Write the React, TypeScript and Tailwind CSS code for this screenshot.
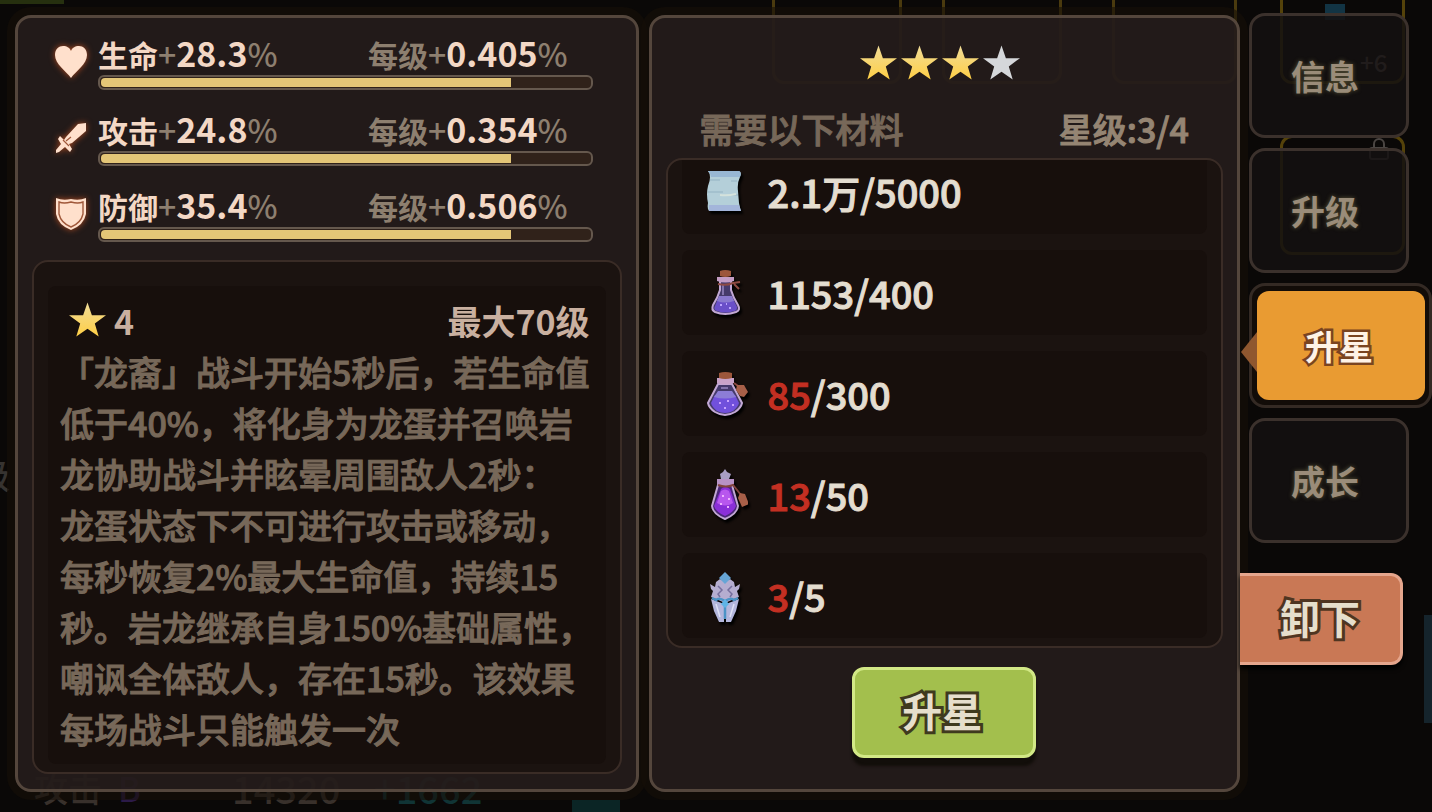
import React from 'react';
import { Lock } from 'lucide-react';

const stats = [
  { id: 'hp', label: '生命', value: '28.3', step: '0.405', icon: HeartIcon },
  { id: 'atk', label: '攻击', value: '24.8', step: '0.354', icon: SwordIcon },
  { id: 'def', label: '防御', value: '35.4', step: '0.506', icon: ShieldIcon },
];

const skillLines = [
  '「龙裔」战斗开始5秒后，若生命值',
  '低于40%，将化身为龙蛋并召唤岩',
  '龙协助战斗并眩晕周围敌人2秒：',
  '龙蛋状态下不可进行攻击或移动，',
  '每秒恢复2%最大生命值，持续15',
  '秒。岩龙继承自身150%基础属性，',
  '嘲讽全体敌人，存在15秒。该效果',
  '每场战斗只能触发一次',
];

const materials = [
  { icon: ScrollIcon, have: '2.1万', need: '5000', enough: true },
  { icon: FlaskIcon, have: '1153', need: '400', enough: true },
  { icon: PotionIcon, have: '85', need: '300', enough: false },
  { icon: ElixirIcon, have: '13', need: '50', enough: false },
  { icon: CrystalIcon, have: '3', need: '5', enough: false },
];

function HeartIcon() {
  return (
    <svg viewBox="0 0 34 34" className="w-[34px] h-[34px] drop-shadow-[0_0_3px_#b04c22]">
      <path d="M17 33C12 26 1 19 1 10C1 4 5 1 9 1C13 1 16 3 17 6C18 3 21 1 25 1C29 1 33 4 33 10C33 19 22 26 17 33Z" fill="#ffe0cc" />
    </svg>
  );
}

function SwordIcon() {
  return (
    <svg viewBox="0 0 34 34" className="w-[34px] h-[34px] drop-shadow-[0_0_3px_#b04c22]">
      <path d="M24 3L32 2L32 10L18 22L15 23L18 28L16 31L11 26L5 31L2 32L2 29L7 23L4 18L6 15L10 19L12 16Z" fill="#ffe0cc" />
      <path d="M9 19L15 25M12 20L17 16" stroke="#a0583a" strokeWidth="1.2" />
    </svg>
  );
}

function ShieldIcon() {
  return (
    <svg viewBox="0 0 34 34" className="w-[34px] h-[34px] drop-shadow-[0_0_3px_#b04c22]">
      <path d="M2 1Q9 4 17 2Q25 4 32 1V17Q30 28 17 33Q4 28 2 17Z" fill="#ffe0cc" />
      <path d="M5 5Q10 7 17 5Q24 7 29 5V17Q27 26 17 30Q7 26 5 17Z" fill="none" stroke="#a0583a" strokeWidth="1.4" />
    </svg>
  );
}

function Star({ lit = true }: { lit?: boolean }) {
  return (
    <svg viewBox="0 0 38 36" className="w-[37px] h-9">
      <defs>
        <linearGradient id="gold" x1="0" y1="0" x2="0" y2="1">
          <stop offset="0" stopColor="#f0dc98" />
          <stop offset="1" stopColor="#ffcf45" />
        </linearGradient>
      </defs>
      <path d="M19 0L23.5 13H38L26.500 21.500L30.500 35L19 27L7.500 35L11.500 21.500L0 13H14.500Z" fill={lit ? 'url(#gold)' : '#d5d7da'} />
    </svg>
  );
}

function ScrollIcon() {
  return (
    <svg viewBox="0 0 48 54" className="w-12 h-[54px] drop-shadow-[2px_3px_1px_#000]">
      <path d="M8 6H39Q42 7 40 12Q37 18 38 26L39 38Q40 43 41 46H9Q7 44 8 38Q6 29 8 21Q12 11 8 6Z" fill="#b4cfd9" />
      <path d="M8 6H39Q42 7 40 12H11Q11 9 8 6Z" fill="#98b7d3" />
      <path d="M9 40H39L41 46H9Z" fill="#a3b5da" />
      <path d="M10 15H20M31 16H37M8 27H23M30 30H38" stroke="#94b3c3" />
      <path d="M20 30Q28 31 36 29" stroke="#d4e2dc" strokeWidth="2" fill="none" />
    </svg>
  );
}

function FlaskIcon() {
  return (
    <svg viewBox="0 0 48 54" className="w-12 h-[54px] drop-shadow-[2px_3px_1px_#000]">
      <path d="M20 15V24Q18 31 13 39Q11 44 15 46Q25 50 36 46Q41 44 38 39Q33 31 31 24V15Z" fill="#453a6b" stroke="#c2a8d4" strokeWidth="2" />
      <path d="M18 33H33L37 41Q37 45 34 45Q25 48 17 45Q13 44 15 40Z" fill="#6a4fc9" />
      <path d="M19 30H32L34 35Q25 38 17 35Z" fill="#8a79cf" />
      <path d="M23 18V29" stroke="#8273ab" strokeWidth="2" />
      <path d="M17 11H34V15Q25 18 17 15Z" fill="#c49dc4" />
      <path d="M18 18Q26 20 33 17L40 16M34 18L39 23" stroke="#8d4a42" strokeWidth="2" fill="none" />
      <path d="M20 5Q25 3 31 5V10Q25 12 20 10Z" fill="#9c563b" />
      <path d="M20 39H22M29 42H31M26 38H27" stroke="#bda4ff" strokeWidth="2" />
    </svg>
  );
}

function PotionIcon() {
  return (
    <svg viewBox="0 0 48 54" className="w-12 h-[54px] drop-shadow-[2px_3px_1px_#000]">
      <path d="M18 17L8 36Q9 41 15 45Q25 51 35 45Q41 41 42 36L32 17Z" fill="#453a6b" stroke="#c2a8d4" strokeWidth="2" />
      <path d="M15 28H35L39 36Q38 40 33 44Q25 48 17 44Q12 40 11 36Z" fill="#7150dc" />
      <path d="M18 24H32L36 30Q25 33 14 30Z" fill="#8c7dd6" />
      <path d="M21 21H28" stroke="#8273ab" strokeWidth="2" />
      <path d="M17 11H34V16Q25 19 17 16Z" fill="#c9a3c9" />
      <path d="M19 6Q25 4 32 6V11Q25 13 19 11Z" fill="#9c563b" />
      <path d="M34 16L38 19" stroke="#8d4a42" strokeWidth="2" />
      <path d="M37 18L44 18L48 25L44 30L40 29L36 23Z" fill="#a75f48" />
      <path d="M19 36H21M27 34H29M32 38H34M24 41H26" stroke="#c8a2ff" strokeWidth="2" />
    </svg>
  );
}

function ElixirIcon() {
  return (
    <svg viewBox="0 0 48 54" className="w-12 h-[54px] drop-shadow-[2px_3px_1px_#000]">
      <path d="M18 17L12 38Q13 46 25 51Q37 46 38 38L32 17Z" fill="#4b2779" stroke="#c2a8d4" strokeWidth="2" />
      <path d="M21 21Q25 17 30 21L36 38Q34 44 25 48Q16 44 14 38Z" fill="#8a2fd8" />
      <path d="M21 23Q25 20 29 23L33 35Q25 40 17 35Z" fill="#b857ee" />
      <path d="M17 11H34V16Q25 19 17 16Z" fill="#b792c5" />
      <path d="M25 1L27 4L31 6L29 11H21L20 6L23 4Z" fill="#a89dc4" />
      <path d="M18 17Q26 20 33 17L41 27" stroke="#81443e" strokeWidth="2" fill="none" />
      <path d="M40 25L45 26L49 36L42 39L38 30Z" fill="#a75f48" />
      <path d="M22 28H24M28 31H30M20 36H22M27 39H29" stroke="#efb0ff" strokeWidth="2" />
    </svg>
  );
}

function CrystalIcon() {
  return (
    <svg viewBox="0 0 48 54" className="w-12 h-[54px] drop-shadow-[2px_3px_1px_#000]">
      <path d="M20 10L25 13L30 10L34 13L35 18L40 15L39 20L37 22L39 28L34 30L25 34L16 30L11 28L13 22L11 20L10 15L15 18L16 13Z" fill="#b5add0" />
      <path d="M11 30L24 35V53H19L14 42Z" fill="#b3b6dc" />
      <path d="M39 30L26 35V53H31L36 42Z" fill="#b3b6dc" />
      <path d="M25 3L31 9L25 15L19 9Z" fill="#66a5d6" />
      <path d="M12 29L16 31Q19 28 25 32Q31 28 34 31L38 29M25 32V50" stroke="#4c93c6" strokeWidth="2.500" fill="none" />
      <path d="M25 30L29 35L25 39L21 35Z" fill="#5fb4e6" />
      <path d="M18 17L22 21L18 25L20 28M32 17L28 21L32 25L30 28" stroke="#756e9d" strokeWidth="1.500" fill="none" />
      <path d="M16 35L20 48M34 35L30 48" stroke="#dde0f5" strokeWidth="1.500" />
    </svg>
  );
}

function Tab({ children }: { children: React.ReactNode }) {
  return (
    <button className="w-40 h-[125px] rounded-2xl border-[3px] border-[#3b312c] bg-[#141010]/85 pr-2 text-[34px] leading-[51px] font-bold text-[#9a8c79] [text-shadow:0_0_4px_#5c5638]">
      {children}
    </button>
  );
}

export default function App() {
  return (
    <div className="relative isolate min-h-screen overflow-hidden bg-[#0a0807] font-['Noto_Sans_CJK_SC','Noto_Sans',sans-serif]">
      {/* dimmed character screen behind the dialog */}
      <div className="absolute inset-0 -z-10 overflow-hidden text-[34px] leading-[40px] font-medium" aria-hidden="true">
        <div className="absolute left-0 top-0 h-1 w-16 bg-[#26300f]" />
        <div className="absolute -left-6 top-[455px] text-[#363330]">级</div>
        <div className="absolute bottom-1 left-[34px] flex items-center text-[#38302b]">
          <span className="w-[84px]">攻击</span>
          <span className="w-[114px] text-[#2b1a48]">B</span>
          <span className="w-[142px] text-[38px]">14320</span>
          <span className="text-[38px] text-[#103435]">+1662</span>
        </div>
        <div className="absolute bottom-0 left-[572px] h-3 w-12 bg-[#0b2525]" />
        <div className="absolute -top-4 left-[772px] h-[100px] w-[130px] rounded-xl border-[3px] border-[#4a3a0e]" />
        <div className="absolute -top-4 left-[942px] h-[100px] w-[120px] rounded-xl border-[3px] border-[#4a3a0e]" />
        <div className="absolute -top-4 left-[1112px] h-[100px] w-[125px] rounded-xl border-[3px] border-[#4a3a0e]" />
        <div className="absolute -top-4 left-[1280px] h-[100px] w-[125px] rounded-xl border-[3px] border-[#54420a]" />
        <div className="absolute left-[1280px] top-[135px] h-[120px] w-[125px] rounded-xl border-[3px] border-[#54420a]" />
        <div className="absolute left-[1325px] top-1 h-4 w-5 bg-[#123444]" />
        <div className="absolute left-[1360px] top-[42px] text-[24px] text-[#6a625c]">+6</div>
        <Lock className="absolute left-[1367px] top-[137px] h-6 w-6 text-[#4a4542]" />
        <div className="absolute right-0 top-[615px] h-[108px] w-2 bg-[#15242c]" />
      </div>

      <main className="flex min-h-screen items-stretch pt-[15px] pb-5">
        <section className="ml-[15px] flex flex-[625] flex-col rounded-2xl border-[3px] border-[#54463c] bg-[#241c1b]/94 px-[14px] pt-[15px] pb-[15px] shadow-[0_0_0_8px_#150f0899]">
          <div className="flex flex-col gap-[19px] pl-[22px] pr-[29px]">
            {stats.map((s) => (
              <div key={s.id} className="flex items-center gap-[10px]">
                <s.icon />
                <div className="flex-1">
                  <div className="flex h-[42px] items-baseline text-[32px] leading-[40px] font-medium text-[#8d7f6f]">
                    <div className="flex w-[270px] items-baseline">
                      <span className="text-[30px] font-bold text-[#f3d8c5]">{s.label}</span>
                      <span>+</span>
                      <span className="text-[34px] font-bold text-[#f3d8c5]">{s.value}</span>
                      <span>%</span>
                    </div>
                    <div className="flex items-baseline">
                      <span className="text-[30px] font-bold">每级</span>
                      <span>+</span>
                      <span className="text-[34px] font-bold text-[#f3d8c5]">{s.step}</span>
                      <span>%</span>
                    </div>
                  </div>
                  <div className="h-[15px] rounded-md border-2 border-[#65584d] bg-[#30221a] p-px">
                    <div className="h-full w-[84%] rounded-l-sm bg-[#e4c677]" />
                  </div>
                </div>
              </div>
            ))}
          </div>

          <div className="mt-[18px] flex-1 rounded-2xl border-2 border-[#3a2c26] bg-[#1b1310] px-[14px] pt-6 pb-2">
            <div className="h-full rounded-lg bg-[#170f0c] px-3 pt-2">
              <div className="flex h-[52px] items-center justify-between pl-[9px] pr-1 text-[34px] leading-[51px] font-bold text-[#c9b0a0]">
                <span className="flex items-center gap-2">
                  <Star />4
                </span>
                <span>最大70级</span>
              </div>
              <p className="text-[34px] leading-[51px] font-medium whitespace-nowrap text-[#776859] [-webkit-text-stroke:1px_#776859]">
                {skillLines.map((line) => (
                  <span key={line} className="block">{line}</span>
                ))}
              </p>
            </div>
          </div>
        </section>

        <section className="ml-[10px] flex flex-[591] flex-col rounded-2xl border-[3px] border-[#54463c] bg-[#241c1b]/94 px-[14px] pt-[27px] shadow-[0_0_0_8px_#150f0899]">
          <div className="flex justify-center gap-1 pr-2">
            <Star />
            <Star />
            <Star />
            <Star lit={false} />
          </div>
          <div className="mt-[22px] flex items-center justify-between px-[34px] text-[34px] leading-[51px] font-medium">
            <h2 className="font-medium text-[#776859] [-webkit-text-stroke:1px_#776859]">需要以下材料</h2>
            <span className="text-[#958573] [-webkit-text-stroke:1px_#958573]">星级:3/4</span>
          </div>

          <div className="mt-1 overflow-hidden rounded-2xl border-2 border-[#3a2c26] bg-[#1b1310] px-[14px] pb-2">
            <ul className="-mt-[11px] flex flex-col gap-4">
              {materials.map((m) => (
                <li key={m.need} className="flex h-[85px] items-center gap-5 rounded-lg bg-[#170f0c] pl-[18px] text-[38px] leading-[51px] font-medium text-[#e4ddd0] [-webkit-text-stroke:1px_currentColor]">
                  <m.icon />
                  <span>
                    {m.enough ? m.have : <span className="text-[#c32f22]">{m.have}</span>}/{m.need}
                  </span>
                </li>
              ))}
            </ul>
          </div>

          <button className="mx-auto mt-[19px] h-[91px] w-[184px] rounded-xl border-[3px] border-[#d2e886] bg-[#a3bf4d] pr-1 pb-1 text-[40px] leading-[51px] font-bold text-[#e6dfcc] shadow-[0_8px_3px_#120e0a] [-webkit-text-stroke:6px_#3f3a1e] [paint-order:stroke_fill]">
            升星
          </button>
        </section>

        <nav className="-mt-[2px] flex w-48 flex-none flex-col">
          <div className="flex flex-col gap-[10px] pl-[9px]">
            <Tab>信息</Tab>
            <Tab>升级</Tab>
            <div className="relative">
              <svg viewBox="0 0 16 40" className="absolute top-[49px] -left-2 h-10 w-4">
                <path d="M16 0L0 20L16 40Z" fill="#8f572f" />
              </svg>
              <div className="rounded-2xl border-[3px] border-[#342a24] bg-[#120c08] p-[5px] pr-1">
                <button className="h-[109px] w-full rounded-xl bg-[#e99b32] pr-1 text-[34px] leading-[51px] font-bold text-[#fff3e6] [-webkit-text-stroke:5px_#7a4420] [paint-order:stroke_fill]">
                  升星
                </button>
              </div>
            </div>
            <Tab>成长</Tab>
          </div>
          <button className="mt-[30px] h-[92px] w-[163px] rounded-r-xl border-[3px] border-l-0 border-[#e5a68d] bg-[#c97855] pb-1 text-[40px] leading-[51px] font-bold text-[#e6dfcc] shadow-[0_4px_4px_#000] [-webkit-text-stroke:6px_#4f3521] [paint-order:stroke_fill]">
            卸下
          </button>
        </nav>
      </main>
    </div>
  );
}
